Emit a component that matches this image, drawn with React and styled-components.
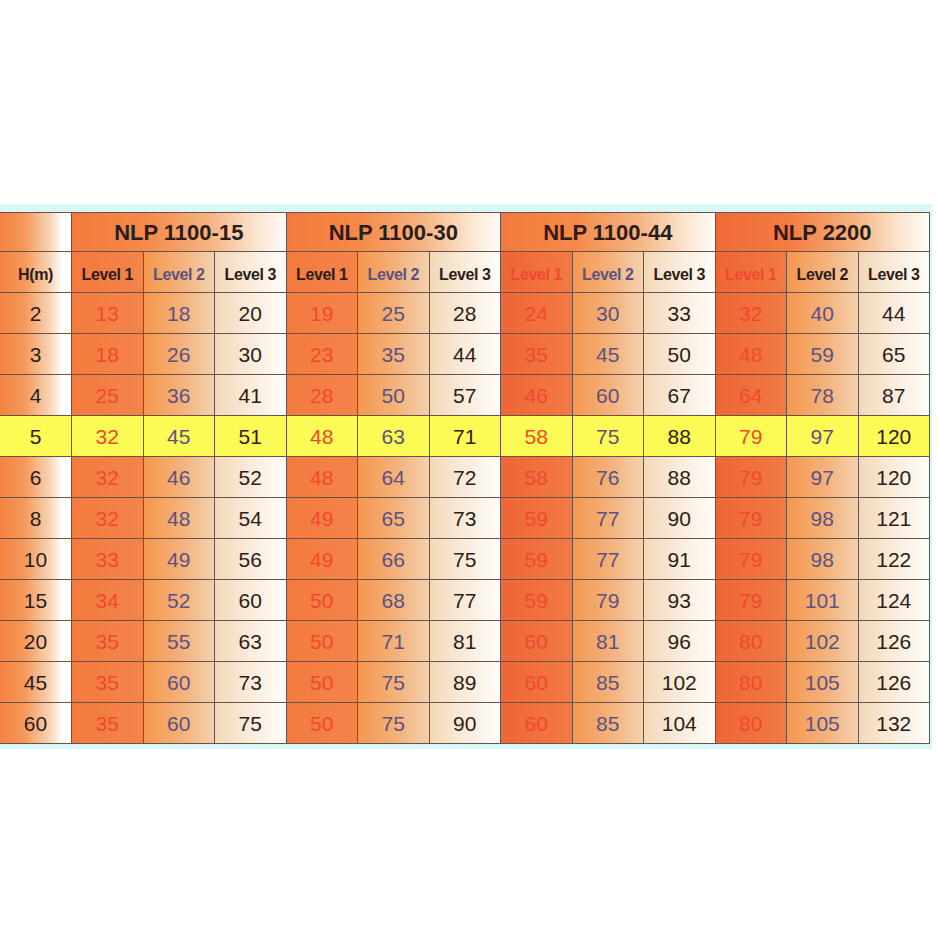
import React from "react";
import styled, { createGlobalStyle } from "styled-components";

const Global = createGlobalStyle`
  html, body { margin: 0; padding: 0; background: #ffffff; }
  body { font-family: "Liberation Sans", Arial, sans-serif; }
`;

const Page = styled.div`
  width: 938px;
  height: 938px;
  padding-top: 204px;
  box-sizing: border-box;
`;

const Band = styled.div`
  width: 932px;
  background: #d9f7f6;
  padding: 8px 2px 5px 0;
  box-sizing: border-box;
`;

const Grid = styled.div`
  display: grid;
  grid-template-columns: 71px repeat(12, 1fr);
  grid-template-rows: 39px 41px repeat(11, 41px);
  width: 930px;
  border-top: 1px solid #6b5148;
  border-right: 1px solid #6b5148;
  box-sizing: border-box;
`;

const colBg = {
  h: "linear-gradient(90deg, #f3813f 0%, #f59a5c 35%, #f8d3b4 70%, #ffffff 88%, #ffffff 100%)",
  l1: "linear-gradient(90deg, #f37a3d 0%, #f4844a 100%)",
  l1r: "linear-gradient(90deg, #ee6636 0%, #f27a42 100%)",
  l2: "linear-gradient(90deg, #f5974f 0%, #f4b27c 55%, #f3d1ae 100%)",
  l3: "linear-gradient(90deg, #f2d8b8 0%, #f9ecdc 50%, #fffdf9 100%)",
  group: "linear-gradient(90deg, #f37a3c 0%, #f48a4a 35%, #f5b584 65%, #fae3cc 85%, #fffcf8 100%)",
  groupR: "linear-gradient(90deg, #ef6a38 0%, #f37d42 35%, #f5b280 65%, #fae3cc 85%, #fffcf8 100%)",
  yellow: "#fcfa55",
};

const textColor = {
  dark: "#2d1c17",
  red: "#f1492f",
  blue: "#5b5282",
};

const Cell = styled.div`
  display: flex;
  align-items: center;
  justify-content: center;
  box-sizing: border-box;
  border-bottom: 1px solid #6b5148;
  border-left: ${(p) => (p.$noLeft ? "none" : "1px solid #6b5148")};
  background: ${(p) => colBg[p.$bg]};
  color: ${(p) => textColor[p.$tone]};
  grid-column: span ${(p) => p.$span || 1};
`;

const GroupTitle = styled(Cell)`
  font-weight: 700;
  font-size: 22px;
  padding-top: 1px;
`;

const LevelLabel = styled(Cell)`
  font-weight: 700;
  font-size: 16px;
  letter-spacing: -0.4px;
  padding-top: 5px;
`;

const Num = styled(Cell)`
  font-size: 21px;
  padding-top: 1px;
`;

const groups = [
  { name: "NLP 1100-15", red: false, labels: ["dark", "blue", "dark"] },
  { name: "NLP 1100-30", red: false, labels: ["dark", "blue", "dark"] },
  { name: "NLP 1100-44", red: true, labels: ["red", "blue", "dark"] },
  { name: "NLP 2200", red: true, labels: ["red", "dark", "dark"] },
];

const rows = [
  ["2", 13, 18, 20, 19, 25, 28, 24, 30, 33, 32, 40, 44],
  ["3", 18, 26, 30, 23, 35, 44, 35, 45, 50, 48, 59, 65],
  ["4", 25, 36, 41, 28, 50, 57, 46, 60, 67, 64, 78, 87],
  ["5", 32, 45, 51, 48, 63, 71, 58, 75, 88, 79, 97, 120],
  ["6", 32, 46, 52, 48, 64, 72, 58, 76, 88, 79, 97, 120],
  ["8", 32, 48, 54, 49, 65, 73, 59, 77, 90, 79, 98, 121],
  ["10", 33, 49, 56, 49, 66, 75, 59, 77, 91, 79, 98, 122],
  ["15", 34, 52, 60, 50, 68, 77, 59, 79, 93, 79, 101, 124],
  ["20", 35, 55, 63, 50, 71, 81, 60, 81, 96, 80, 102, 126],
  ["45", 35, 60, 73, 50, 75, 89, 60, 85, 102, 80, 105, 126],
  ["60", 35, 60, 75, 50, 75, 90, 60, 85, 104, 80, 105, 132],
];

const tones = ["red", "blue", "dark"];

function bgFor(i, groupIdx) {
  if (i === 0) return groups[groupIdx].red ? "l1r" : "l1";
  return i === 1 ? "l2" : "l3";
}

export default function App() {
  return (
    <>
      <Global />
      <Page>
        <Band>
          <Grid>
            <Cell $bg="h" $noLeft />
            {groups.map((g) => (
              <GroupTitle key={g.name} $span={3} $bg={g.red && g.name === "NLP 2200" ? "groupR" : "group"} $tone="dark">
                {g.name}
              </GroupTitle>
            ))}

            <LevelLabel $bg="h" $tone="dark" $noLeft>H(m)</LevelLabel>
            {groups.map((g, gi) =>
              [0, 1, 2].map((i) => (
                <LevelLabel key={`${gi}-${i}`} $bg={bgFor(i, gi)} $tone={g.labels[i]}>
                  Level {i + 1}
                </LevelLabel>
              ))
            )}

            {rows.map((r) => {
              const hl = r[0] === "5";
              return (
                <React.Fragment key={r[0]}>
                  <Num $bg={hl ? "yellow" : "h"} $tone="dark" $noLeft>{r[0]}</Num>
                  {r.slice(1).map((v, k) => {
                    const gi = Math.floor(k / 3);
                    const i = k % 3;
                    return (
                      <Num key={k} $bg={hl ? "yellow" : bgFor(i, gi)} $tone={tones[i]}>
                        {v}
                      </Num>
                    );
                  })}
                </React.Fragment>
              );
            })}
          </Grid>
        </Band>
      </Page>
    </>
  );
}
